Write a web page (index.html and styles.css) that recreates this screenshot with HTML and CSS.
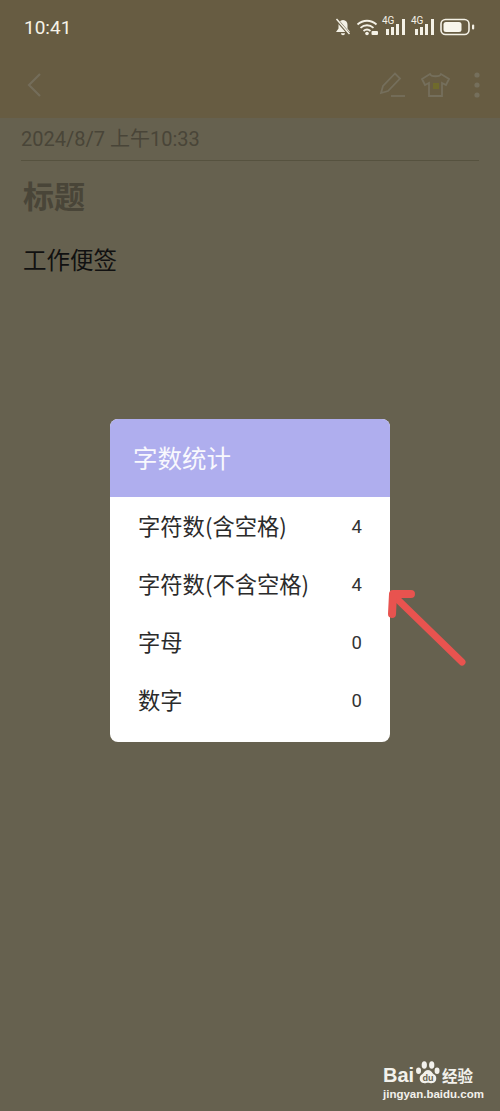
FILE: index.html
```html
<!DOCTYPE html>
<html lang="zh-CN">
<head>
  <meta charset="UTF-8">
  <meta name="viewport" content="width=device-width, initial-scale=1.0">
  <title>字数统计</title>
  <link rel="stylesheet" href="styles.css">
</head>
<body>
  <div class="page">
    <header class="top">
      <div class="status-bar">
        <span class="time">10:41</span>
        <div class="status-icons">
          <!-- muted bell -->
          <svg width="16" height="18" viewBox="0 0 16 18">
            <path d="M8 2c3 0 4.500 2.200 4.500 5v3.500L15 14H1l2.500-3.500V7C3.500 4.200 5 2 8 2z" fill="#f4f1e6"/>
            <path d="M6 15.200h4c0 1.200-.9 2-2 2s-2-.8-2-2z" fill="#f4f1e6"/>
            <path d="M1.500 1.500l13 15" stroke="#675c42" stroke-width="3"/>
            <path d="M1.500 1l13 15" stroke="#f4f1e6" stroke-width="1.500"/>
          </svg>
          <!-- wifi -->
          <svg class="wifi" width="23" height="18" viewBox="0 0 22 18">
            <g fill="none" stroke="#f4f1e6" stroke-width="1.800">
              <path d="M1 6.500c5.500-5 13.500-5 19 0"/>
              <path d="M4 9.800c3.800-3.400 9.200-3.400 13 0"/>
              <path d="M7 13c2-1.700 5-1.700 7 0"/>
            </g>
            <circle cx="10.500" cy="15.500" r="1.800" fill="#f4f1e6"/>
            <rect x="15" y="13" width="6.500" height="4" rx="1" fill="#f4f1e6"/>
          </svg>
          <div class="signal">
            <span class="net">4G</span>
            <svg width="24" height="18" viewBox="0 0 24 18">
              <path d="M4 11h3v6H4zM9 9h3v8H9zM14 6h3v11h-3zM20 1h3v16h-3z" fill="#f4f1e6"/>
            </svg>
          </div>
          <div class="signal">
            <span class="net">4G</span>
            <svg width="24" height="18" viewBox="0 0 24 18">
              <path d="M4 11h3v6H4zM9 9h3v8H9zM14 6h3v11h-3zM20 1h3v16h-3z" fill="#f4f1e6"/>
            </svg>
          </div>
          <!-- battery -->
          <svg class="battery" width="36" height="18" viewBox="0 0 36 18">
            <rect x="1" y="1.500" width="28" height="15" rx="4.500" fill="none" stroke="#f4f1e6" stroke-width="1.600"/>
            <rect x="3.500" y="4" width="18" height="10" rx="2.500" fill="#f8f6ec"/>
            <rect x="32" y="6.500" width="2.200" height="5" rx="1.100" fill="#f4f1e6"/>
          </svg>
        </div>
      </div>
      <div class="toolbar">
        <svg class="back" width="14" height="26" viewBox="0 0 14 26">
          <path d="M13 2L2 13l11 11" fill="none" stroke="#746d5a" stroke-width="2.200"/>
        </svg>
        <div class="tools">
          <svg width="28" height="28" viewBox="0 0 28 28">
            <path d="M3 22L5 15 17 2.500l5 5L10 20z" fill="none" stroke="#756f5c" stroke-width="1.800"/>
            <path d="M13 25h14" stroke="#756f5c" stroke-width="1.800"/>
          </svg>
          <svg width="30" height="28" viewBox="0 0 30 28">
            <path d="M10 3L2 8l3 6 4-2v13h13V12l4 2 3-6-8-5c-1 3-10 3-11 0z" fill="none" stroke="#756f5c" stroke-width="1.800"/>
            <rect x="13" y="12" width="6" height="6" fill="#6f6a2c"/>
          </svg>
          <svg class="dots" width="8" height="28" viewBox="0 0 8 28">
            <circle cx="4" cy="4" r="2.600" fill="#756f5c"/>
            <circle cx="4" cy="14" r="2.600" fill="#756f5c"/>
            <circle cx="4" cy="24" r="2.600" fill="#756f5c"/>
          </svg>
        </div>
      </div>
    </header>

    <main class="note">
      <div class="note-date">2024/8/7 上午10:33</div>
      <h1 class="note-title">标题</h1>
      <p class="note-body">工作便签</p>
    </main>

    <div class="overlay">
      <div class="dialog">
        <div class="dialog-head">字数统计</div>
        <div class="dialog-rows">
          <div class="row"><span class="label">字符数(含空格)</span><span class="num">4</span></div>
          <div class="row"><span class="label">字符数(不含空格)</span><span class="num">4</span></div>
          <div class="row"><span class="label">字母</span><span class="num">0</span></div>
          <div class="row"><span class="label">数字</span><span class="num">0</span></div>
        </div>
      </div>
    </div>

    <svg class="arrow" width="84" height="80" viewBox="0 0 84 80">
      <g fill="none" stroke="#e8534f" stroke-linecap="round" stroke-linejoin="round">
        <path d="M77 73L8 6" stroke-width="7"/>
        <path d="M26 5L8 5l-1 20" stroke-width="8"/>
      </g>
    </svg>

    <div class="watermark">
      <div class="wm-top">
        <span class="wm-bai">Bai</span>
        <svg class="wm-paw" width="28" height="28" viewBox="0 0 32 34">
          <ellipse cx="4.500" cy="13" rx="3" ry="4" fill="#f2f1ec"/>
          <ellipse cx="11.500" cy="6" rx="3.200" ry="4.600" fill="#f2f1ec"/>
          <ellipse cx="20.500" cy="6" rx="3.200" ry="4.600" fill="#f2f1ec"/>
          <ellipse cx="27" cy="13" rx="3" ry="4" fill="#f2f1ec"/>
          <path d="M16 12c4 0 5 4 8 6 3 2 3 9-2 10-3 .5-4-.5-6-.5s-3 1-6 .5c-5-1-5-8-2-10 3-2 4-6 8-6z" fill="#f2f1ec"/>
          <text x="16" y="26" text-anchor="middle" class="wm-du">du</text>
        </svg>
        <span class="wm-jy">经验</span>
      </div>
      <div class="wm-url">jingyan.baidu.com</div>
    </div>
  </div>
</body>
</html>
```

FILE: styles.css
```css
html, body {
  margin: 0;
  padding: 0;
}
body {
  font-family: "Noto Sans CJK SC", "Noto Sans", sans-serif;
}
.page {
  position: relative;
  width: 500px;
  height: 1111px;
  overflow: hidden;
  background-color: #66614f;
}

/* top area */
.top {
  height: 118px;
  background-color: #675c42;
}
.status-bar {
  height: 54px;
  padding: 0 24px 0 24px;
  display: flex;
  align-items: center;
  justify-content: space-between;
}
.time {
  font-family: Roboto, sans-serif;
  font-size: 19px;
  color: #f6f3e8;
}
.status-icons {
  display: flex;
  align-items: center;
  gap: 5px;
}
.wifi {
  margin-right: -2px;
}
.signal {
  position: relative;
  width: 24px;
  height: 18px;
}
.signal svg {
  display: block;
}
.net {
  position: absolute;
  left: 0;
  top: -3px;
  font-family: Roboto, sans-serif;
  font-size: 10px;
  line-height: 12px;
  color: #f4f1e6;
}
.toolbar {
  height: 64px;
  padding: 0 19px 2px 27px;
  box-sizing: border-box;
  display: flex;
  align-items: center;
  justify-content: space-between;
}
.tools {
  display: flex;
  align-items: center;
  gap: 14px;
}
.dots {
  margin-left: 9px;
}

/* note behind the dialog */
.note {
  padding: 7px 21px 0;
}
.note-date {
  height: 35px;
  font-family: Roboto, "Noto Sans CJK SC", sans-serif;
  font-size: 20px;
  line-height: 28px;
  color: #494538;
  border-bottom: 1px solid #56523f;
}
.note-title {
  margin: 11px 0 0 2px;
  font-size: 31px;
  line-height: 46px;
  font-weight: 700;
  color: #494538;
}
.note-body {
  margin: 24px 0 0 2px;
  font-size: 23.500px;
  line-height: 34px;
  color: #111;
}

/* dialog */
.overlay {
  position: absolute;
  top: 419px;
  left: 0;
  width: 100%;
  display: flex;
  justify-content: center;
}
.dialog {
  width: 280px;
  height: 323px;
  border-radius: 8px;
  overflow: hidden;
  background-color: #fff;
}
.dialog-head {
  height: 78px;
  padding-left: 23px;
  line-height: 77px;
  font-size: 24.500px;
  color: #f8f8fd;
  background-color: #afaeee;
}
.dialog-rows {
  padding: 1px 28px 0;
}
.row {
  height: 58px;
  display: flex;
  align-items: center;
  justify-content: space-between;
  font-size: 22.300px;
  color: #2b2b2b;
}
.label {
  padding-bottom: 4px;
}
.num {
  font-family: Roboto, sans-serif;
  font-size: 18.500px;
  color: #333;
}

.arrow {
  position: absolute;
  left: 385px;
  top: 589px;
}

/* watermark */
.watermark {
  position: absolute;
  left: 383px;
  top: 1057px;
  width: 112px;
  color: #f2f1ec;
}
.wm-top {
  position: relative;
  height: 30px;
  display: flex;
  align-items: flex-end;
}
.wm-bai {
  font-family: "Liberation Sans", sans-serif;
  font-weight: 700;
  font-size: 20px;
  line-height: 24px;
  width: 31px;
}
.wm-paw {
  margin: 0 0 -1px 0;
  flex: none;
}
.wm-du {
  font-family: "Liberation Sans", sans-serif;
  font-size: 11px;
  font-weight: 700;
  fill: #66614f;
}
.wm-jy {
  font-size: 15.500px;
  line-height: 24px;
  font-weight: 700;
  margin-left: 0;
  white-space: nowrap;
}
.wm-url {
  font-family: "Liberation Sans", sans-serif;
  font-size: 11.500px;
  font-weight: 700;
  line-height: 14px;
  white-space: nowrap;
}
```
